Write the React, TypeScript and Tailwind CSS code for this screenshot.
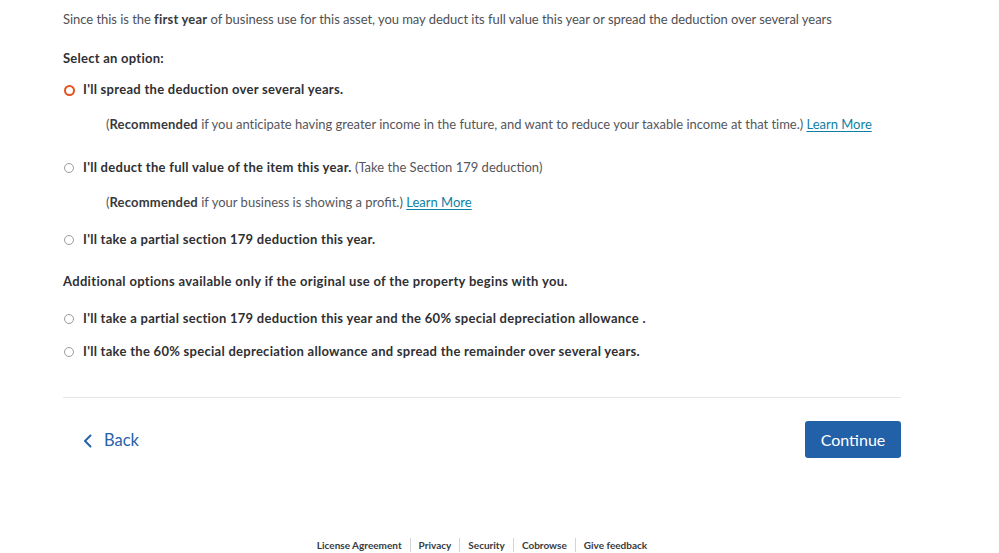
import React from "react";

const font = { fontFamily: "Lato, 'Noto Sans', sans-serif" };

function Radio({ checked }: { checked?: boolean }) {
  return checked ? (
    <span className="inline-block w-[11px] h-[11px] rounded-full border-[2.5px] border-[#e5521f] bg-white shrink-0" />
  ) : (
    <span className="inline-block w-[10px] h-[10px] rounded-full border border-[#9a9ba0] bg-white shrink-0" />
  );
}

function LearnMore() {
  return (
    <a href="#" className="text-[#0d7fa5] underline underline-offset-2">
      Learn More
    </a>
  );
}

function Option({ checked, children }: { checked?: boolean; children: React.ReactNode }) {
  return (
    <label className="flex items-center gap-[8px] h-[20px]">
      <span className="w-[12px] flex justify-center">
        <Radio checked={checked} />
      </span>
      <span className="text-[13px] text-[#393a3d]">{children}</span>
    </label>
  );
}

// bold option label, a little wider to match the heavier face in the screenshot
function B({ children }: { children: React.ReactNode }) {
  return <b className="tracking-[0.28px] text-[#2f3034]">{children}</b>;
}

export default function App() {
  const footerLinks = ["License Agreement", "Privacy", "Security", "Cobrowse", "Give feedback"];

  return (
    <div className="w-[999px] h-[553px] bg-white flex flex-col" style={font}>
      <div className="ml-[63px] w-[838px] pt-[10px] flex flex-col flex-1">
        {/* intro */}
        <p className="text-[13px] text-[#4f5055] leading-[18px] tracking-[-0.04px]">
          Since this is the <b className="text-[#393a3d] tracking-[0.2px]">first year</b> of business use for this asset, you may deduct its full value this year or spread the deduction over several years
        </p>

        <p className="mt-[21px] text-[13px] font-bold tracking-[0.25px] text-[#2f3034] leading-[18px]">Select an option:</p>

        <div className="mt-[13px]">
          <Option checked>
            <B>I'll spread the deduction over several years.</B>
          </Option>
          <p className="mt-[15px] ml-[43px] text-[13px] text-[#55565b] leading-[18px] tracking-[-0.02px]">
            (<b className="text-[#393a3d] tracking-[0.2px]">Recommended</b> if you anticipate having greater income in the future, and want to reduce your taxable income at that time.) <LearnMore />
          </p>

          <div className="mt-[25px]">
            <Option>
              <B>I'll deduct the full value of the item this year.</B>{" "}
              <span className="text-[#55565b]">(Take the Section 179 deduction)</span>
            </Option>
          </div>
          <p className="mt-[15px] ml-[43px] text-[13px] text-[#55565b] leading-[18px]">
            (<b className="text-[#393a3d] tracking-[0.2px]">Recommended</b> if your business is showing a profit.) <LearnMore />
          </p>

          <div className="mt-[19px]">
            <Option>
              <B>I'll take a partial section 179 deduction this year.</B>
            </Option>
          </div>
        </div>

        <p className="mt-[21px] text-[13px] font-bold tracking-[0.32px] text-[#2f3034] leading-[20px]">
          Additional options available only if the original use of the property begins with you.
        </p>

        <div className="mt-[18px] flex flex-col gap-[13px]">
          <Option>
            <B>I'll take a partial section 179 deduction this year and the 60% special depreciation allowance .</B>
          </Option>
          <Option>
            <B>I'll take the 60% special depreciation allowance and spread the remainder over several years.</B>
          </Option>
        </div>

        <div className="mt-[35px] border-t border-[#e7e7e8]" />

        <div className="mt-[23px] flex items-center justify-between">
          <button className="ml-[20px] flex items-center gap-[12px] text-[16.5px] text-[#2762a8] pt-[2px]">
            <svg width="9" height="14" viewBox="0 0 9 14" fill="none">
              <path d="M7.5 1.5 L2 7 L7.5 12.5" stroke="#2762a8" strokeWidth="2" strokeLinecap="round" strokeLinejoin="round" />
            </svg>
            Back
          </button>
          <button className="w-[96px] h-[37px] rounded-[3px] bg-[#2261a8] text-white text-[16px]">Continue</button>
        </div>

        {/* footer links */}
        <div className="mt-auto mb-[1px] flex justify-center items-center text-[10px] font-bold text-[#393a3d]">
          {footerLinks.map((l, i) => (
            <span key={l} className={"px-[8px] leading-[14px] " + (i > 0 ? "border-l border-[#d4d4d6]" : "")}>
              {l}
            </span>
          ))}
        </div>
      </div>
    </div>
  );
}
